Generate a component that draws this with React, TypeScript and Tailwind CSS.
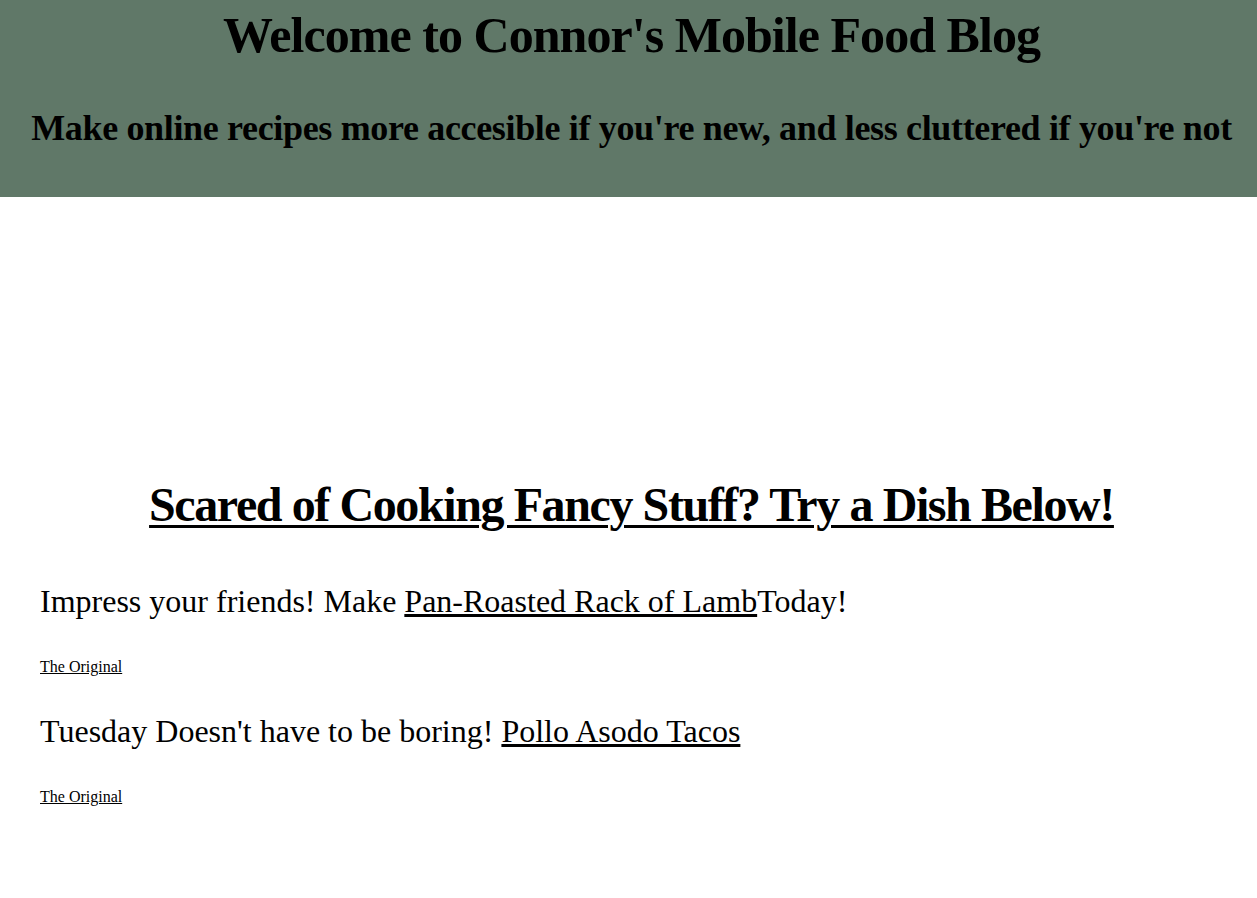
export default function App() {
  return (
    <div className="min-h-[898px] bg-white text-black" style={{ fontFamily: '"Liberation Serif", "Times New Roman", serif' }}>
      <header className="bg-[#607868] h-[197px] text-center pl-[6px] pt-[10px]">
        <h1 className="m-0 text-[50px] font-bold leading-[50px] tracking-[-0.95px]">Welcome to Connor's Mobile Food Blog</h1>
        <h2 className="mt-[50px] text-[36px] font-bold leading-[36px] tracking-[-0.34px]">Make online recipes more accesible if you're new, and less cluttered if you're not</h2>
      </header>
      <main className="pt-[284px] px-[40px]">
        <h1 className="text-center pl-[6px] text-[48px] font-bold underline decoration-[3px] underline-offset-[4px] leading-[48px] tracking-[-1.4px]">Scared of Cooking Fancy Stuff? Try a Dish Below!</h1>
        <p className="mt-[56px] text-[32px] leading-[32px]">
          Impress your friends! Make <a href="#" className="underline text-black">Pan-Roasted Rack of Lamb</a>Today!
        </p>
        <p className="mt-[42px] text-[16px] leading-[16px]">
          <a href="#" className="underline text-black">The Original</a>
        </p>
        <p className="mt-[40px] text-[32px] leading-[32px]">
          Tuesday Doesn't have to be boring! <a href="#" className="underline text-black">Pollo Asodo Tacos</a>
        </p>
        <p className="mt-[42px] text-[16px] leading-[16px]">
          <a href="#" className="underline text-black">The Original</a>
        </p>
      </main>
    </div>
  );
}
